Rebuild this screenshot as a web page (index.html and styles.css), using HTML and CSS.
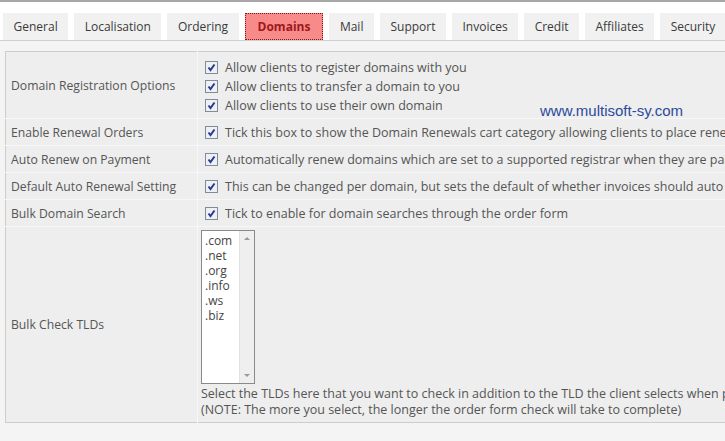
FILE: index.html
```html
<!DOCTYPE html>
<html lang="en">
<head>
    <meta charset="UTF-8">
    <title>Configuration - Domains</title>
    <link rel="stylesheet" href="styles.css">
</head>
<body>
    <div class="topline"></div>
    <ul class="tabs">
        <li>General</li>
        <li>Localisation</li>
        <li>Ordering</li>
        <li class="active">Domains</li>
        <li>Mail</li>
        <li>Support</li>
        <li>Invoices</li>
        <li>Credit</li>
        <li>Affiliates</li>
        <li>Security</li>
        <li>Social</li>
    </ul>
    <div class="panel">
        <table class="form">
            <tr class="tall">
                <td class="label">Domain Registration Options</td>
                <td class="field">
                    <div class="check"><span class="box"></span>Allow clients to register domains with you</div>
                    <div class="check"><span class="box"></span>Allow clients to transfer a domain to you</div>
                    <div class="check"><span class="box"></span>Allow clients to use their own domain</div>
                </td>
            </tr>
            <tr>
                <td class="label">Enable Renewal Orders</td>
                <td class="field"><div class="check"><span class="box"></span>Tick this box to show the Domain Renewals cart category allowing clients to place renewal orders</div></td>
            </tr>
            <tr>
                <td class="label">Auto Renew on Payment</td>
                <td class="field"><div class="check"><span class="box"></span>Automatically renew domains which are set to a supported registrar when they are paid for</div></td>
            </tr>
            <tr>
                <td class="label">Default Auto Renewal Setting</td>
                <td class="field"><div class="check"><span class="box"></span>This can be changed per domain, but sets the default of whether invoices should auto renew</div></td>
            </tr>
            <tr>
                <td class="label">Bulk Domain Search</td>
                <td class="field"><div class="check"><span class="box"></span>Tick to enable for domain searches through the order form</div></td>
            </tr>
            <tr>
                <td class="label">Bulk Check TLDs</td>
                <td class="field">
                    <div class="listbox">
                        <ul class="options">
                            <li>.com</li>
                            <li>.net</li>
                            <li>.org</li>
                            <li>.info</li>
                            <li>.ws</li>
                            <li>.biz</li>
                        </ul>
                        <div class="scroll">
                            <span class="arrow up"></span>
                            <span class="arrow down"></span>
                        </div>
                    </div>
                    <div class="help">Select the TLDs here that you want to check in addition to the TLD the client selects when performing a domain search<br>(NOTE: The more you select, the longer the order form check will take to complete)</div>
                </td>
            </tr>
        </table>
        <div class="watermark">www.multisoft-sy.com</div>
    </div>
</body>
</html>
```

FILE: styles.css
```css
html, body {
    margin: 0;
    padding: 0;
    overflow: hidden;
}
body {
    width: 1100px;
    background: #f4f4f4;
    font-family: "Open Sans", Arial, sans-serif;
    font-size: 12px;
    color: #555;
}
.topline {
    height: 2px;
    background: #a8a8a8;
}
.tabs {
    list-style: none;
    margin: 0;
    padding: 11px 0 0 3px;
    display: flex;
    gap: 6px;
    background: #fff;
    border-bottom: 1px solid #cfcfcf;
}
.tabs li {
    height: 27px;
    line-height: 27px;
    padding: 0 10.5px;
    background: #f1f1f1;
    color: #3a3a3a;
    font-size: 12px;
}
.tabs li.active {
    box-sizing: border-box;
    padding: 0 12px;
    background: #f98a8a;
    border: 1px dotted #7a1818;
    line-height: 25px;
    color: #9c1a1a;
    font-weight: bold;
}
.panel {
    position: relative;
    padding: 10px 5px 0;
    height: 400px;
}
.form {
    width: 1090px;
    border: 1px solid #cdcdcd;
    border-collapse: collapse;
    background: #eeeeee;
}
.form td {
    border: 1px solid #f7f7f7;
    padding: 0;
}
.form tr:first-child td { border-top: 0; }
.form tr:last-child td { border-bottom: 0; }
.form td:first-child { border-left: 0; }
.label {
    width: 186px;
    padding-left: 5px !important;
    height: 26px;
    color: #555;
    font-size: 12.2px;
}
.field {
    padding-left: 7px !important;
}
.tall .field {
    padding: 6px 0 3px 7px !important;
}
.check {
    display: flex;
    align-items: center;
    height: 19px;
    white-space: nowrap;
    font-size: 12.5px;
}
.box {
    width: 11px;
    height: 11px;
    border: 1px solid #7f8c99;
    margin-right: 7px;
    background-color: #eef0f6;
    background-image: url("data:image/svg+xml;utf8,<svg xmlns='http://www.w3.org/2000/svg' viewBox='0 0 11 11'><path d='M2.5 5.5 L4.5 8 L8.5 2.5' fill='none' stroke='%23283a8c' stroke-width='2'/></svg>");
}
.listbox {
    display: flex;
    width: 52px;
    height: 152px;
    margin: 3px 0 0 -4px;
    border: 1px solid #8a8a8a;
    background: #fff;
}
.options {
    list-style: none;
    margin: 0;
    padding: 2px 0 0 3px;
    flex: 1;
    font-size: 12px;
    color: #444;
}
.options li {
    height: 15px;
    line-height: 15px;
}
.scroll {
    width: 14px;
    background: #efefef;
    border-left: 1px solid #e2e2e2;
    display: flex;
    flex-direction: column;
    justify-content: space-between;
    align-items: center;
    padding: 6px 0;
}
.arrow {
    width: 0;
    height: 0;
    border-left: 3px solid transparent;
    border-right: 3px solid transparent;
}
.arrow.up { border-bottom: 3px solid #999; }
.arrow.down { border-top: 3px solid #999; }
.help {
    margin-left: -4px;
    padding: 2px 0 4px;
    line-height: 16px;
    white-space: nowrap;
    font-size: 12.5px;
}
.watermark {
    position: absolute;
    left: 540px;
    top: 61px;
    font-family: "Liberation Sans", Arial, sans-serif;
    font-size: 15px;
    color: #2c4a9c;
}
```
